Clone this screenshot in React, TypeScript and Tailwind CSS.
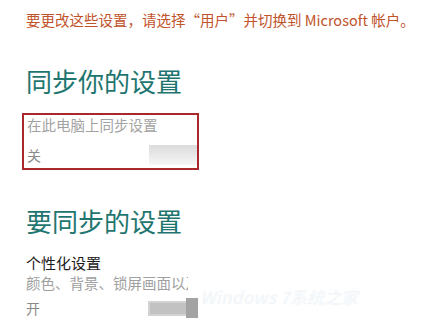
import React from 'react';

const font = { fontFamily: '"Noto Sans CJK SC", "Noto Sans", sans-serif' };

const Toggle: React.FC<{ on: boolean }> = ({ on }) => (
  <div className="relative flex h-[20px] w-[50px] items-center">
    <div className="h-[15px] w-[44px] border-2 border-[#d2d2d2] bg-[#c2c2c2]" />
    <div
      className={`absolute top-0 h-[20px] w-[12px] bg-[#a3a3a3] ${on ? 'right-0' : 'left-0'}`}
    />
  </div>
);

export default function App() {
  return (
    <div className="relative h-[334px] w-[433px] overflow-hidden bg-white" style={font}>
      <div className="flex flex-col pl-[26px] pt-[11px]">
        <p className="text-[14.5px] leading-[17px] text-[#c1532b] whitespace-nowrap">
          要更改这些设置，请选择“用户”并切换到 Microsoft 帐户。
        </p>

        <h2 className="mt-[37px] text-[26px] leading-[32px] text-[#1f7670]">同步你的设置</h2>

        <div className="mt-[16px] -ml-[4px] flex w-[177px] flex-col border-2 border-[#a8282c] pl-[3px] pb-[3px]">
          <span className="text-[14.5px] leading-[20px] text-[#a3a3a3] whitespace-nowrap">在此电脑上同步设置</span>
          <div className="mt-[10px] flex items-center justify-between">
            <span className="text-[14px] leading-[18px] text-[#8a8a8a]">关</span>
            <div className="h-[20px] w-[48px] bg-gradient-to-b from-[#dcdcdc] to-[#f6f6f6]" />
          </div>
        </div>

        <h2 className="mt-[35px] text-[26px] leading-[32px] text-[#1f7670]">要同步的设置</h2>

        <div className="mt-[16px] flex w-[172px] flex-col">
          <span className="text-[15px] leading-[20px] text-[#1c1c1c] whitespace-nowrap">个性化设置</span>
          <div className="w-[162px] overflow-hidden">
            <span className="block text-[14.5px] leading-[20px] text-[#a0a0a0] whitespace-nowrap">颜色、背景、锁屏画面以及你的帐户图片</span>
          </div>
          <div className="mt-[5px] flex items-center justify-between">
            <span className="text-[14px] leading-[18px] text-[#8a8a8a]">开</span>
            <Toggle on />
          </div>
        </div>
      </div>

      <span className="pointer-events-none absolute left-[200px] top-[284px] text-[17px] font-bold italic text-[#e8f1f7] opacity-50 whitespace-nowrap">
        Windows 7系统之家
      </span>
    </div>
  );
}
